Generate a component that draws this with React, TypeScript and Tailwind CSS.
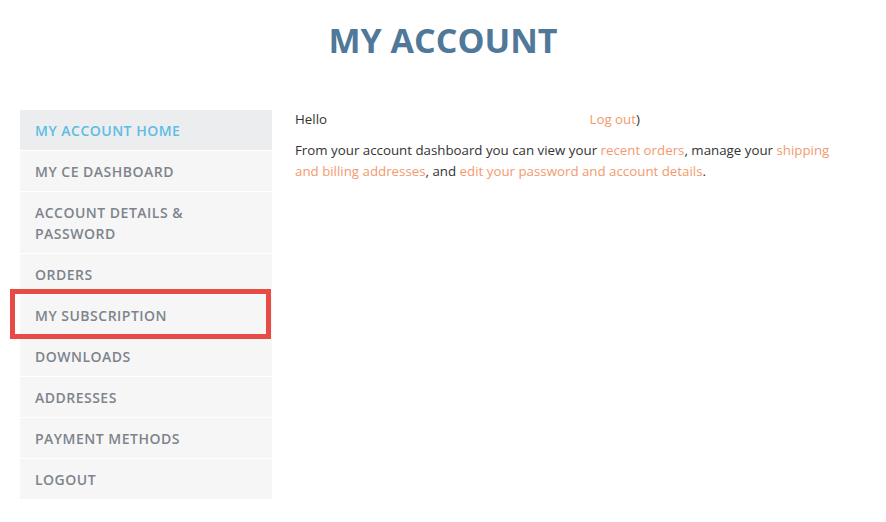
import React from "react";

const navItems = [
  "My account home",
  "My CE dashboard",
  "Account details & password",
  "Orders",
  "My subscription",
  "Downloads",
  "Addresses",
  "Payment methods",
  "Logout",
];

const A: React.FC<{ children: React.ReactNode }> = ({ children }) => (
  <a href="#" className="text-[#f39a6e] no-underline">
    {children}
  </a>
);

const App: React.FC = () => {
  return (
    <div className="min-h-[522px] bg-white font-['Open_Sans',sans-serif]">
      <h1 className="pt-[21px] text-center text-[34px] font-bold leading-[38px] text-[#4f7899]">
        MY ACCOUNT
      </h1>

      <div className="mt-[51px] flex pl-5">
        {/* sidebar */}
        <nav className="relative w-[252px] shrink-0">
          <ul className="flex flex-col gap-px">
            {navItems.map((label, i) => (
              <li
                key={label}
                className={
                  i === 0
                    ? "bg-[#ecedef] py-[9.5px] pl-[15px] pr-8 text-[14px] font-semibold uppercase leading-[21px] tracking-[0.035em] text-[#5dbde3]"
                    : "bg-[#f6f6f6] py-[9.5px] pl-[15px] pr-8 text-[14px] font-semibold uppercase leading-[21px] tracking-[0.035em] text-[#7d848c]"
                }
              >
                {label}
              </li>
            ))}
          </ul>
          {/* highlight box drawn over the subscription item */}
          <div className="pointer-events-none absolute left-[-10px] top-[179px] h-[50px] w-[261px] border-[5px] border-[#e84a45]" />
        </nav>

        {/* content */}
        <div className="ml-[23px] w-[548px] text-[13.3px] leading-[21px] text-[#333]">
          <p className="-mt-px">
            Hello <span className="inline-block w-[259px]" />
            <A>Log out</A>)
          </p>
          <p className="mt-[10px]">
            From your account dashboard you can view your <A>recent orders</A>, manage your{" "}
            <A>shipping and billing addresses</A>, and <A>edit your password and account details</A>.
          </p>
        </div>
      </div>
    </div>
  );
};

export default App;
